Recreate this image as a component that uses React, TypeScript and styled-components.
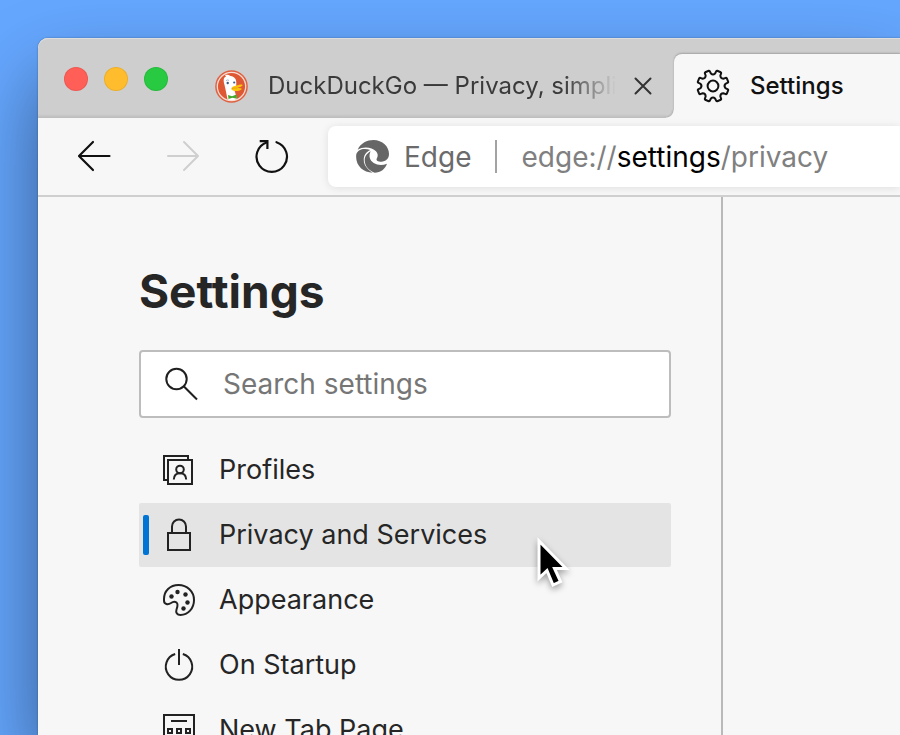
import React, { useState } from "react";
import styled, { createGlobalStyle } from "styled-components";

const GlobalStyle = createGlobalStyle`
  *, *::before, *::after { box-sizing: border-box; }
  html, body, #root { height: 100%; }
  body {
    margin: 0;
    overflow: hidden;
    background: #65a7ff;
    font-family: Inter, "Liberation Sans", sans-serif;
    color: #262626;
  }
  button, input { font: inherit; color: inherit; }
  button { border: 0; padding: 0; background: none; }
  svg { display: block; flex: none; }
`;

const Desktop = styled.div`
  display: flex;
  height: 100%;
  padding: 38px 0 0 38px;
`;

const BrowserWindow = styled.div`
  flex: 1;
  min-width: 0;
  display: flex;
  flex-direction: column;
  border-top-left-radius: 10px;
  background: #f7f7f7;
  box-shadow: 0 0 2px rgba(0, 0, 0, 0.35), 0 40px 80px rgba(0, 0, 0, 0.46);
`;

const TabStrip = styled.div`
  display: flex;
  height: 80px;
  border-top-left-radius: 10px;
  background: linear-gradient(#cecece 76px, #bcbcbc);
  box-shadow: inset 0 1px 0 #dedede;
`;

const WindowControls = styled.div`
  display: flex;
  gap: 16px;
  padding: 29px 0 0 26px;
`;

const ControlDot = styled.button<{ $color: string }>`
  width: 24px;
  height: 24px;
  border-radius: 50%;
  background: ${(p) => p.$color};
  box-shadow: inset 0 0 0 1px rgba(0, 0, 0, 0.08);
`;

const Tab = styled.div<{ $active?: boolean }>`
  position: relative;
  display: flex;
  align-items: center;
  font-size: 24px;
  line-height: 32px;
  color: ${(p) => (p.$active ? "#111" : "#3a3a3a")};
  ${(p) =>
    p.$active
      ? `
    flex: 1;
    margin-top: 16px;
    padding-left: 22px;
    border-top-left-radius: 8px;
    background: #f7f7f7;
    box-shadow: 0 -1px 2px rgba(0, 0, 0, 0.22);
    clip-path: inset(-4px 0 0 -10px);
    font-weight: 500;
    &::before {
      content: "";
      position: absolute;
      left: -8px;
      bottom: 0;
      width: 8px;
      height: 8px;
      background: radial-gradient(circle at 0 0, #cecece 5px, #b9b9b9 7px, #f7f7f7 8px);
    }`
      : `
    width: 506px;
    gap: 16px;
    margin-top: 16px;
    padding: 0 20px 0 47px;`}
`;

const TabButton = styled.button<{ $fade?: boolean }>`
  display: flex;
  align-items: center;
  gap: 20px;
  flex: 1;
  min-width: 0;
  text-align: left;
  overflow: hidden;
  white-space: nowrap;
  ${(p) => p.$fade && "mask-image: linear-gradient(90deg, #000 calc(100% - 52px), transparent);"}
`;

const CloseButton = styled.button`
  width: 22px;
  height: 22px;
  display: grid;
  place-items: center;
`;

const Toolbar = styled.div`
  display: flex;
  align-items: center;
  height: 79px;
  border-bottom: 2px solid #cfcfcf;
  overflow: hidden;
`;

const NavButtons = styled.div`
  display: flex;
  gap: 53px;
  padding: 0 38px 2px;
`;

const NavButton = styled.button`
  width: 36px;
  height: 36px;
  display: grid;
  place-items: center;
  &:disabled { color: #cfcfcf; }
`;

const AddressBar = styled.div`
  flex: 1;
  display: flex;
  align-items: center;
  height: 61px;
  padding-left: 28px;
  border-radius: 8px 0 0 8px;
  background: #fff;
  box-shadow: 0 1px 8px rgba(0, 0, 0, 0.1);
  font-size: 28px;
  line-height: 32px;
  color: #6b6b6b;
`;

const SiteButton = styled.button`
  display: flex;
  align-items: center;
  gap: 15px;
  padding-right: 24px;
  border-right: 2px solid #a3a3a3;
`;

const UrlButton = styled.button`
  flex: 1;
  padding-left: 24px;
  text-align: left;
  white-space: nowrap;
  color: #808080;
`;

const UrlInput = styled.input`
  flex: 1;
  min-width: 0;
  margin-left: 24px;
  padding: 0;
  border: 0;
  outline: 0;
`;

const UrlHost = styled.span`
  color: #000;
`;

const Page = styled.div`
  flex: 1;
  min-height: 0;
  display: flex;
`;

const Sidebar = styled.aside`
  width: 685px;
  padding: 64px 50px 0 101px;
  border-right: 2px solid #b9b9b9;
  overflow: hidden;
`;

const Content = styled.main`
  flex: 1;
`;

const Heading = styled.h1`
  margin: 0;
  font-size: 46px;
  line-height: 60px;
  font-weight: 700;
`;

const SearchBox = styled.label`
  display: flex;
  align-items: center;
  gap: 24px;
  height: 68px;
  margin: 29px 0 20px;
  padding: 0 24px;
  border: 2px solid #bdbdbd;
  border-radius: 4px;
  background: #fff;
`;

const SearchInput = styled.input`
  flex: 1;
  min-width: 0;
  padding: 0;
  border: 0;
  outline: 0;
  background: none;
  font-size: 28px;
  line-height: 36px;
  &::placeholder { color: #767676; opacity: 1; }
`;

const NavList = styled.ul`
  display: flex;
  flex-direction: column;
  gap: 1px;
  margin: 0;
  padding: 0;
  list-style: none;
`;

const NavItem = styled.li`
  position: relative;
`;

const NavLink = styled.a<{ $selected?: boolean }>`
  display: flex;
  align-items: center;
  gap: 23px;
  height: 64px;
  padding-left: 23px;
  border-radius: 2px;
  font-size: 27px;
  line-height: 36px;
  color: #262626;
  text-decoration: none;
  background: ${(p) => (p.$selected ? "#e4e4e4" : "transparent")};
`;

const SelectionMark = styled.span`
  position: absolute;
  left: 4px;
  top: 12px;
  width: 6px;
  height: 40px;
  border-radius: 2px;
  background: #0074d4;
`;

const Pointer = styled.svg`
  position: absolute;
  left: 394px;
  top: 30px;
  z-index: 1;
  filter: drop-shadow(0 3px 3px rgba(0, 0, 0, 0.35));
`;

const gearOutline = (() => {
  const at = (deg: number, r: number) => {
    const a = (deg * Math.PI) / 180;
    return `${(17 + r * Math.sin(a)).toFixed(2)} ${(17 - r * Math.cos(a)).toFixed(2)}`;
  };
  let d = "";
  for (let i = 0; i < 8; i++) {
    const c = 22.5 + i * 45;
    d += `${i ? "L" : "M"}${at(c - 13, 12.6)} L${at(c - 10, 15.2)} Q${at(c - 9, 15.8)} ${at(c - 7, 15.8)} L${at(c + 7, 15.8)} Q${at(c + 9, 15.8)} ${at(c + 10, 15.2)} L${at(c + 13, 12.6)} Q${at(c + 22.5, 10.6)} ${at(c + 32, 12.6)} `;
  }
  return d + "Z";
})();

const GearIcon = () => (
  <svg width="34" height="34" viewBox="0 0 34 34" fill="none" stroke="#111" strokeWidth="2" strokeLinejoin="round">
    <path d={gearOutline} />
    <circle cx="17" cy="17" r="5.4" />
  </svg>
);

const DuckIcon = () => (
  <svg width="33" height="33" viewBox="0 0 33 33">
    <circle cx="16.500" cy="16.500" r="16.300" fill="#e0603f" />
    <circle cx="16.500" cy="16.500" r="14.200" fill="#de5833" stroke="#f6dcd4" strokeWidth="1.300" />
    <path d="M12.500 29.500 C11.500 24 10.500 19 9.500 15 C8 10 8.500 7.500 11 6.500 L10 5 C12 4.300 14 5 15.500 6 C19.500 6.500 21.500 9 21.300 13 L21.200 16 C19.500 18 19 20 20 22 L22 29 C19 30.500 15.500 30.500 12.500 29.500 Z" fill="#fff" />
    <circle cx="12.700" cy="13" r="1.200" fill="#3d5b86" />
    <circle cx="19.200" cy="12.500" r="1.100" fill="#3d5b86" />
    <path d="M11 10.600 Q12.500 9.400 14 10.400" stroke="#8ea4c8" strokeWidth=".8" fill="none" />
    <path d="M16.300 18.500 C17 16.300 20 15.800 22 15.600 C24 14.500 27 14.200 27.500 15 C27.800 16 25 17.300 22.500 17.800 C23.500 18.500 26.500 17.800 26.700 18.700 C26.500 20.500 21 21.700 18.500 20.700 C17 20.300 16 19.600 16.300 18.500 Z" fill="#fdc50d" />
    <path d="M17 18.700 C19 17.500 21 18.300 22.500 17.800" stroke="#dd9a17" strokeWidth=".8" fill="none" />
    <path d="M13 25 L17 26.200 L21.500 24.500 L22 28.700 L17.500 27.800 L13.500 29 Z" fill="#45a82e" />
  </svg>
);

const EdgeIcon = () => (
  <svg width="33" height="33" viewBox="0 0 99 99" fill="#666">
    <path d="M5 29 C14 9 34 0 52 0 C80 0 99 20 99 42 C99 56 89 65 76 65 C66 65 60 61 62 56 C67 49 66 40 60 34 C48 21 22 19 5 29 Z" />
    <path d="M1 42 C6 27 25 23 43 30 C23 38 18 61 29 79 C35 88 42 94 50 98 C20 98 -4 74 1 42 Z" />
    <path d="M44 34 C37 48 41 61 53 69 C65 76 79 77 93 71 C88 86 74 98 56 98 C37 91 27 77 26 62 C26 49 33 40 44 34 Z" />
  </svg>
);

const BackIcon = () => (
  <svg width="36" height="36" viewBox="0 0 36 36" fill="none" stroke="#111" strokeWidth="2.200" strokeLinecap="round" strokeLinejoin="round">
    <path d="M33.500 18 H3.500 M17 4 L3 18 L17 32" />
  </svg>
);

const ForwardIcon = () => (
  <svg width="36" height="36" viewBox="0 0 36 36" fill="none" stroke="currentColor" strokeWidth="2" strokeLinecap="round" strokeLinejoin="round">
    <path d="M3 18 H33 M19 4 L33 18 L19 32" />
  </svg>
);

const ReloadIcon = () => (
  <svg width="36" height="36" viewBox="0 0 36 36" fill="none" stroke="#111" strokeWidth="2.200" strokeLinecap="round">
    <path d="M22.500 4.200 A15.200 15.200 0 1 1 13 4.200" />
    <path d="M6.800 3.200 H13.400 V9.800" strokeLinecap="square" />
  </svg>
);

const CloseIcon = () => (
  <svg width="18" height="18" viewBox="0 0 18 18" stroke="#333" strokeWidth="2" strokeLinecap="round">
    <path d="M1.500 1.500 L16.500 16.500 M16.500 1.500 L1.500 16.500" />
  </svg>
);

const SearchIcon = () => (
  <svg width="34" height="34" viewBox="0 0 34 34" fill="none" stroke="#1f1f1f" strokeWidth="2">
    <circle cx="11.500" cy="12" r="10.200" />
    <path d="M18.700 19.200 L32 32.500" />
  </svg>
);

const LineIcon = ({ children }: { children: React.ReactNode }) => (
  <svg width="34" height="34" viewBox="0 0 34 34" fill="none" stroke="#222" strokeWidth="2" aria-hidden="true">
    {children}
  </svg>
);

const icons = {
  profiles: (
    <LineIcon>
      <path d="M6 27 H2 V3 H26 V7" />
      <rect x="6" y="7" width="24" height="24" />
      <circle cx="18" cy="16.500" r="3.800" />
      <path d="M11.800 26.500 C12 22.500 14.500 20.300 18 20.300 C21.500 20.300 24 22.500 24.200 26.500" />
    </LineIcon>
  ),
  lock: (
    <LineIcon>
      <rect x="6" y="15" width="22" height="17" />
      <path d="M10 15 V8.500 A7 7 0 0 1 24 8.500 V15" />
    </LineIcon>
  ),
  palette: (
    <LineIcon>
      <path d="M2 16 C2 8 8 2 16.500 2 C25 2 32 8.500 32 17 C32 25.500 26 32 18.500 32 C15 32 13.500 29.500 14.500 26.500 C15.500 23.500 16.500 21 14.500 19.500 C12.500 18 11 18.500 9 20 C6 22 2 21.500 2 17.500 Z" />
      <g fill="#222" stroke="none">
        <circle cx="9.500" cy="13.500" r="2.200" />
        <circle cx="15.500" cy="9" r="2.200" />
        <circle cx="23.500" cy="11.500" r="2.200" />
        <circle cx="25.500" cy="19.500" r="2.200" />
        <circle cx="21.500" cy="25.500" r="2.200" />
      </g>
    </LineIcon>
  ),
  power: (
    <LineIcon>
      <path d="M13.200 6 A13.200 13.200 0 1 0 20.800 6" />
      <path d="M17 1 V17" />
    </LineIcon>
  ),
  newTab: (
    <LineIcon>
      <rect x="2" y="2" width="30" height="30" />
      <path d="M9 8 H25" />
      <path d="M6 16 h4 v4 h-4 Z M15 16 h4 v4 h-4 Z M24 16 h4 v4 h-4 Z" />
    </LineIcon>
  ),
};

const sections = [
  { label: "Profiles", icon: icons.profiles, href: "#profiles" },
  { label: "Privacy and Services", icon: icons.lock, href: "#privacy", selected: true },
  { label: "Appearance", icon: icons.palette, href: "#appearance" },
  { label: "On Startup", icon: icons.power, href: "#startup" },
  { label: "New Tab Page", icon: icons.newTab, href: "#newtab" },
];

const Url = () => {
  const [editing, setEditing] = useState(false);
  if (editing) {
    return (
      <UrlInput
        autoFocus
        aria-label="Address"
        defaultValue="edge://settings/privacy"
        onBlur={() => setEditing(false)}
      />
    );
  }
  return (
    <UrlButton onClick={() => setEditing(true)}>
      edge://<UrlHost>settings</UrlHost>/privacy
    </UrlButton>
  );
};

export default function App() {
  return (
    <>
      <GlobalStyle />
      <Desktop>
        <BrowserWindow>
          <TabStrip>
            <WindowControls>
              <ControlDot $color="#ff5f57" aria-label="Close window" />
              <ControlDot $color="#ffbd2e" aria-label="Minimize window" />
              <ControlDot $color="#28ca41" aria-label="Zoom window" />
            </WindowControls>
            <Tab>
              <TabButton $fade>
                <DuckIcon />
                DuckDuckGo — Privacy, simpli
              </TabButton>
              <CloseButton aria-label="Close tab">
                <CloseIcon />
              </CloseButton>
            </Tab>
            <Tab $active>
              <TabButton>
                <GearIcon />
                Settings
              </TabButton>
            </Tab>
          </TabStrip>
          <Toolbar>
            <NavButtons>
              <NavButton aria-label="Back"><BackIcon /></NavButton>
              <NavButton aria-label="Forward" disabled><ForwardIcon /></NavButton>
              <NavButton aria-label="Reload"><ReloadIcon /></NavButton>
            </NavButtons>
            <AddressBar>
              <SiteButton>
                <EdgeIcon />
                Edge
              </SiteButton>
              <Url />
            </AddressBar>
          </Toolbar>
          <Page>
            <Sidebar>
              <Heading>Settings</Heading>
              <SearchBox>
                <SearchIcon />
                <SearchInput type="text" aria-label="Search settings" placeholder="Search settings" />
              </SearchBox>
              <nav>
                <NavList>
                  {sections.map((s) => (
                    <NavItem key={s.label}>
                      <NavLink href={s.href} $selected={s.selected}>
                        {s.icon}
                        {s.label}
                      </NavLink>
                      {s.selected && <SelectionMark />}
                      {s.selected && (
                        <Pointer width="44" height="60" viewBox="0 0 44 60">
                          <path
                            d="M6 8 V45 L14 37.500 L20 52 L27.500 48.500 L21.500 35.500 H33 Z"
                            fill="#000"
                            stroke="#fff"
                            strokeWidth="3"
                          />
                        </Pointer>
                      )}
                    </NavItem>
                  ))}
                </NavList>
              </nav>
            </Sidebar>
            <Content />
          </Page>
        </BrowserWindow>
      </Desktop>
    </>
  );
}
